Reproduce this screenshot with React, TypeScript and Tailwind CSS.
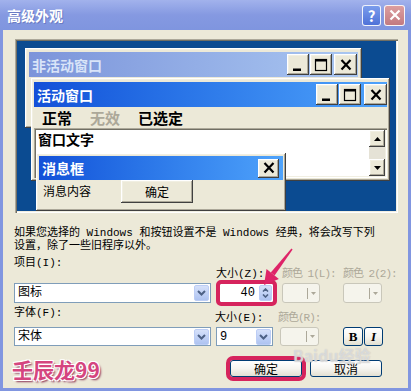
import type { ReactNode } from 'react'

type Glyph = 'min' | 'max' | 'close'

// classic 3D edges used by the preview windows and their buttons
const RAISED =
  'shadow-[inset_-1px_-1px_0_#404040,inset_1px_1px_0_#ffffff,inset_-2px_-2px_0_#aca899,inset_2px_2px_0_#f1efe2]'
const SUNKEN =
  'shadow-[inset_1px_1px_0_#aca899,inset_2px_2px_0_#716f64,inset_-1px_-1px_0_#ffffff,inset_-2px_-2px_0_#f1efe2]'
const CJK = "font-['Noto_Sans_CJK_SC',sans-serif]"
const SONG = "font-['Liberation_Mono','Noto_Sans_CJK_SC',monospace]"

function GlyphIcon({ kind }: { kind: Glyph }) {
  return (
    <svg width="14" height="14" viewBox="0 0 14 14">
      {kind === 'min' && <rect x="2" y="10.5" width="8" height="2.5" fill="#000" />}
      {kind === 'max' && (
        <>
          <rect x="1.5" y="1.5" width="11" height="11" fill="none" stroke="#000" strokeWidth="1.2" />
          <rect x="1" y="1" width="12" height="2.5" fill="#000" />
        </>
      )}
      {kind === 'close' && <path d="M2.5 2 L11.5 11.5 M11.5 2 L2.5 11.5" stroke="#000" strokeWidth="2.2" />}
    </svg>
  )
}

function CapBtn({ kind, className = 'h-[21px] w-[22px]' }: { kind: Glyph; className?: string }) {
  return (
    <div className={`flex items-center justify-center bg-[#ece9d8] ${RAISED} ${className}`}>
      <GlyphIcon kind={kind} />
    </div>
  )
}

function ClassicBtn({ children, className }: { children: ReactNode; className?: string }) {
  return (
    <div className={`flex items-center justify-center bg-[#ece9d8] text-[12px] text-black ${RAISED} ${CJK} ${className}`}>
      {children}
    </div>
  )
}

function ComboArrow() {
  return (
    <div className="mr-[1px] flex h-[16px] w-[15px] items-center justify-center rounded-[2px] border border-[#bccdf5] bg-linear-to-b from-[#d6e1fa] to-[#aec3f1]">
      <svg width="9" height="6" viewBox="0 0 9 6">
        <path d="M1 1 L4.5 4.5 L8 1" fill="none" stroke="#4d6185" strokeWidth="2" />
      </svg>
    </div>
  )
}

function Combo({ text, className }: { text: string; className?: string }) {
  return (
    <div className={`flex items-center border border-[#7f9db9] bg-white ${className}`}>
      <span className={`flex-1 pl-[3px] text-[12px] leading-none text-black ${SONG}`}>{text}</span>
      <ComboArrow />
    </div>
  )
}

function ColorBtn({ className }: { className?: string }) {
  return (
    <div className={`flex items-center justify-end rounded-[3px] border border-[#c9c7ba] bg-[#f5f4ec] pr-[3px] ${className}`}>
      <span className="mr-[3px] h-[11px] w-px bg-[#aca899]" />
      <svg width="5" height="3" viewBox="0 0 5 3">
        <path d="M0 0h5L2.5 3z" fill="#aca899" />
      </svg>
    </div>
  )
}

function XpBtn({ children, className }: { children: ReactNode; className?: string }) {
  return (
    <div
      className={`flex items-center justify-center rounded-[3px] border border-[#003c74] bg-linear-to-b from-white via-[#f6f5f0] to-[#e3e0d2] text-black ${className}`}
    >
      {children}
    </div>
  )
}

function Preview() {
  return (
    <div className={`ml-[12px] mt-[9px] h-[174px] w-[383px] bg-[#ece9d8] p-[2px] ${SUNKEN}`}>
      <div className="relative h-full w-full overflow-hidden bg-[#0b4b91]">
        {/* inactive window */}
        <div className={`absolute left-[8px] top-[7px] h-[80px] w-[337px] bg-[#ece9d8] p-[4px] ${RAISED}`}>
          <div className="flex h-[25px] items-center bg-linear-to-r from-[#7c94da] to-[#aac7f1] pl-[3px] pr-[1px]">
            <span className={`flex-1 text-[14px] font-bold leading-none text-[#d9e4f8] ${CJK}`}>非活动窗口</span>
            <CapBtn kind="min" />
            <CapBtn kind="max" className="ml-[1px] h-[21px] w-[22px]" />
            <CapBtn kind="close" className="ml-[2px] h-[21px] w-[23px]" />
          </div>
        </div>

        {/* active window */}
        <div className={`absolute left-[14px] top-[37px] flex h-[103px] w-[359px] flex-col bg-[#ece9d8] px-[3px] pb-[3px] pt-[4px] ${RAISED}`}>
          <div className="flex h-[25px] items-center bg-linear-to-r from-[#1450d8] to-[#4fa3fb] pl-[3px]">
            <span className={`flex-1 text-[14px] font-bold leading-none text-white ${CJK}`}>活动窗口</span>
            <CapBtn kind="min" />
            <CapBtn kind="max" className="ml-[1px] h-[21px] w-[22px]" />
            <CapBtn kind="close" className="ml-[3px] h-[21px] w-[23px]" />
          </div>
          <div className={`flex h-[21px] items-center gap-[18px] pl-[8px] text-[15px] font-bold leading-none ${CJK}`}>
            <span className="text-black">正常</span>
            <span className="text-[#aca899]">无效</span>
            <span className="text-black">已选定</span>
          </div>
          <div className={`flex h-[50px] bg-white p-[2px] ${SUNKEN}`}>
            <div className={`flex-1 pl-[2px] pt-[1px] text-[14px] font-bold leading-[16px] text-black ${CJK}`}>窗口文字</div>
            <div className="flex w-[16px] flex-col bg-[#e5e2d6]">
              <div className={`flex h-[17px] items-center justify-center bg-[#ece9d8] ${RAISED}`}>
                <svg width="7" height="4" viewBox="0 0 7 4">
                  <path d="M0 4h7L3.5 0z" fill="#000" />
                </svg>
              </div>
              <div className="flex-1" />
              <div className={`flex h-[17px] items-center justify-center bg-[#ece9d8] ${RAISED}`}>
                <svg width="7" height="4" viewBox="0 0 7 4">
                  <path d="M0 0h7L3.5 4z" fill="#000" />
                </svg>
              </div>
            </div>
          </div>
        </div>

        {/* message box */}
        <div className={`absolute left-[19px] top-[112px] flex h-[58px] w-[250px] flex-col bg-[#ece9d8] px-[3px] pt-[3px] ${RAISED}`}>
          <div className="flex h-[24px] items-center bg-linear-to-r from-[#1450d8] to-[#4fa3fb] pl-[3px] pr-[4px]">
            <span className={`flex-1 text-[14px] font-bold leading-none text-white ${CJK}`}>消息框</span>
            <CapBtn kind="close" className="h-[19px] w-[21px]" />
          </div>
          <div className="flex">
            <span className={`w-[82px] pl-[4px] pt-[3px] text-[12px] leading-[16px] text-black ${CJK}`}>消息内容</span>
            <ClassicBtn className="h-[23px] w-[72px]">确定</ClassicBtn>
          </div>
        </div>
      </div>
    </div>
  )
}

export default function App() {
  return (
    <div className={`relative flex h-[391px] w-[411px] flex-col overflow-hidden bg-[#8196e0] ${CJK}`}>
      {/* title bar */}
      <div className="flex h-[30px] items-center bg-linear-to-b from-[#a2b2ec] via-[#8599e1] to-[#7f95df] pl-[7px] pr-[6px]">
        <span className="flex-1 text-[14px] font-bold leading-none text-white [text-shadow:1px_1px_0_#6a7cc4]">高级外观</span>
        <div className="flex h-[21px] w-[19px] items-center justify-center rounded-[3px] border border-white/90 bg-linear-to-b from-[#7b9cec] to-[#4f72d8] text-[15px] font-bold leading-none text-white">
          ?
        </div>
        <div className="ml-[3px] flex h-[21px] w-[21px] items-center justify-center rounded-[3px] border border-white/90 bg-linear-to-b from-[#dc9ea0] to-[#c27a80]">
          <svg width="12" height="12" viewBox="0 0 12 12">
            <path d="M1.5 1.5 L10.5 10.5 M10.5 1.5 L1.5 10.5" stroke="#fff" strokeWidth="2.2" />
          </svg>
        </div>
      </div>

      {/* body */}
      <div className="mx-[3px] mb-[3px] flex flex-1 flex-col bg-[#ece9d8]">
        <Preview />

        <div className={`ml-[11px] mt-[14px] whitespace-nowrap text-[11px] leading-[13px] text-black ${SONG}`}>
          如果您选择的 Windows 和按钮设置不是 Windows 经典，将会改写下列
          <br />
          设置，除了一些旧程序以外。
        </div>

        <div className={`ml-[11px] flex h-[30px] whitespace-nowrap text-[11px] leading-[13px] ${SONG}`}>
          <span className="w-[202px] pt-[4px] text-black">项目(I):</span>
          <span className="w-[66px] pt-[15px] text-black">大小(Z):</span>
          <span className="w-[61px] pt-[15px] tracking-[-1px] text-[#aca899]">颜色 1(L):</span>
          <span className="pt-[15px] tracking-[-1px] text-[#aca899]">颜色 2(2):</span>
        </div>

        <div className="ml-[11px] flex h-[20px]">
          <Combo text="图标" className="h-[20px] w-[197px]" />
          <div className="ml-[8px] flex h-[20px] w-[55px] items-center rounded-[2px] border border-[#7f9db9] bg-white outline-4 -outline-offset-1 outline-[#d6245d]">
            <span className={`flex-1 pr-[4px] text-right text-[12px] leading-none text-black ${SONG}`}>40</span>
            <div className="mr-[1px] flex h-[16px] w-[13px] flex-col items-center justify-center gap-[2px] rounded-[2px] border border-[#bccdf5] bg-linear-to-b from-[#d6e1fa] to-[#aec3f1]">
              <svg width="7" height="4" viewBox="0 0 7 4">
                <path d="M1 3.5 L3.5 1 L6 3.5" fill="none" stroke="#4d6185" strokeWidth="1.6" />
              </svg>
              <svg width="7" height="4" viewBox="0 0 7 4">
                <path d="M1 0.5 L3.5 3 L6 0.5" fill="none" stroke="#4d6185" strokeWidth="1.6" />
              </svg>
            </div>
          </div>
          <ColorBtn className="ml-[8px] h-[20px] w-[38px]" />
          <ColorBtn className="ml-[23px] h-[20px] w-[39px]" />
        </div>

        <div className={`ml-[11px] flex h-[24px] whitespace-nowrap text-[11px] leading-[13px] ${SONG}`}>
          <span className="w-[201px] pt-[4px] text-black">字体(F):</span>
          <span className="w-[63px] pt-[9px] text-black">大小(E):</span>
          <span className="pt-[9px] tracking-[-1px] text-[#aca899]">颜色(R):</span>
        </div>

        <div className="ml-[11px] flex h-[19px]">
          <Combo text="宋体" className="h-[19px] w-[197px]" />
          <Combo text="9" className="ml-[5px] h-[19px] w-[57px]" />
          <ColorBtn className="ml-[7px] h-[19px] w-[39px]" />
          <XpBtn className="ml-[24px] h-[19px] w-[20px]">
            <span className="font-['Liberation_Serif',serif] text-[13px] font-bold leading-none">B</span>
          </XpBtn>
          <XpBtn className="ml-[1px] h-[19px] w-[19px]">
            <span className="font-['Liberation_Serif',serif] text-[13px] font-bold italic leading-none">I</span>
          </XpBtn>
        </div>

        <div className="ml-[9px] mt-[11px] flex items-start">
          <span className="w-[218px] text-[21px] font-bold leading-[24px] text-[#d5457f] [text-shadow:-1px_-1px_0_#fff,1px_-1px_0_#fff,-1px_1px_0_#fff,1px_1px_0_#fff,2px_2px_2px_#8a3456]">
            壬辰龙99
          </span>
          <XpBtn className="mt-[3px] h-[17px] w-[72px] text-[12px] outline-4 outline-[#d6245d]">确定</XpBtn>
          <XpBtn className="ml-[8px] mt-[3px] h-[17px] w-[72px] text-[12px]">取消</XpBtn>
        </div>
      </div>

      {/* annotation arrow */}
      <svg className="pointer-events-none absolute left-0 top-0" width="411" height="391" viewBox="0 0 411 391">
        <polygon points="291.4,248.5 292.6,249.5 274.6,275.6 270.8,272.5" fill="#de2468" />
        <polygon points="264,285 266.5,269.1 278.9,279.1" fill="#de2468" />
      </svg>

      {/* faint site watermark */}
      <span className="pointer-events-none absolute left-[293px] top-[347px] text-[16px] font-bold leading-none text-white/45 [text-shadow:0_0_1px_#b8b8b8]">
        Baidu经验
      </span>
    </div>
  )
}
